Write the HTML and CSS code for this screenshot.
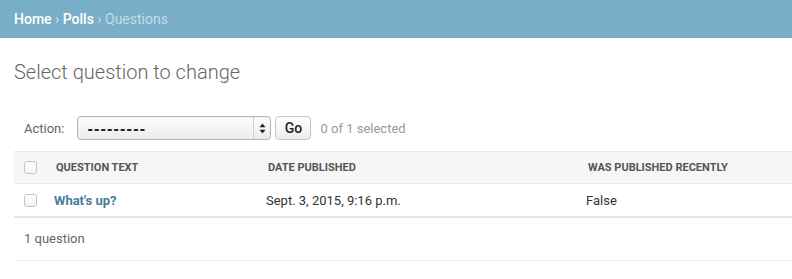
FILE: index.html
```html
<!DOCTYPE html>
<html>
<head>
<meta charset="utf-8">
<link rel="stylesheet" href="styles.css">
</head>
<body>
<div class="breadcrumbs"><a href="#">Home</a> › <a href="#">Polls</a> › Questions</div>
<div class="content">
  <h1>Select question to change</h1>
  <div class="changelist">
    <div class="actions">
      <label class="action-label">Action:</label>
      <div class="select-wrap">
        <select class="action-select"><option>---------</option></select>
        <span class="select-sep"></span>
        <svg class="select-arrows" width="7" height="11" viewBox="0 0 7 11"><path d="M3.5 0.5 L6.5 4.2 H0.5 Z M3.5 10.5 L6.5 6.8 H0.5 Z" fill="#222"/></svg>
      </div>
      <button class="go">Go</button>
      <span class="counter">0 of 1 selected</span>
    </div>
    <table class="result-list">
      <colgroup><col class="c1"><col class="c2"><col class="c3"><col class="c4"></colgroup>
      <thead>
        <tr>
          <th class="cb"><input type="checkbox"></th>
          <th>Question text</th>
          <th>Date published</th>
          <th>Was published recently</th>
        </tr>
      </thead>
      <tbody>
        <tr>
          <td class="cb"><input type="checkbox"></td>
          <th class="link"><a href="#">What's up?</a></th>
          <td>Sept. 3, 2015, 9:16 p.m.</td>
          <td>False</td>
        </tr>
      </tbody>
    </table>
    <p class="paginator">1 question</p>
  </div>
</div>
</body>
</html>
```
FILE: styles.css
```css
html, body {
  margin: 0;
  padding: 0;
  overflow: hidden;
}
body {
  font-family: Roboto, "Liberation Sans", sans-serif;
  font-size: 14px;
  color: #333;
  background: #fff;
}
.breadcrumbs {
  background: #79aec8;
  height: 38px;
  line-height: 38px;
  padding-left: 14px;
  color: #c4dce8;
  font-size: 14px;
}
.breadcrumbs a {
  color: #fff;
  text-decoration: none;
  font-weight: 500;
}
.content {
  padding-left: 14px;
}
h1 {
  margin: 22px 0 22px;
  font-size: 20px;
  line-height: 24px;
  font-weight: 300;
  color: #666;
}
.actions {
  display: flex;
  align-items: center;
  padding: 10px 10px 11px;
  height: 24px;
  font-size: 13px;
  color: #666;
}
.action-label {
  margin-right: 13px;
}
.select-wrap {
  position: relative;
  width: 194px;
  height: 24px;
}
.action-select {
  appearance: none;
  -webkit-appearance: none;
  width: 100%;
  height: 24px;
  margin: 0;
  border: 1px solid #b5b5b5;
  border-radius: 4px;
  background: linear-gradient(#fdfdfd, #ececec);
  font-family: "Liberation Sans", sans-serif;
  font-size: 16px;
  font-weight: bold;
  letter-spacing: 1.2px;
  color: #222;
  padding: 0 0 0 9px;
  box-shadow: inset 0 1px 1px rgba(0,0,0,0.05);
}
.select-sep {
  position: absolute;
  left: 176px;
  top: 1px;
  bottom: 1px;
  width: 1px;
  background: #cfcfcf;
}
.select-arrows {
  position: absolute;
  left: 182px;
  top: 7px;
}
.go {
  margin-left: 4px;
  width: 36px;
  height: 24px;
  padding: 0;
  border: 1px solid #c6c6c6;
  border-radius: 4px;
  background: linear-gradient(#ffffff, #ededed);
  font-family: Roboto, "Liberation Sans", sans-serif;
  font-size: 14px;
  font-weight: 500;
  color: #222;
}
.counter {
  margin-left: 9px;
  color: #999;
}
.result-list {
  width: 100%;
  border-collapse: collapse;
  table-layout: fixed;
}
.c1 { width: 32px; }
.c2 { width: 212px; }
.c3 { width: 320px; }
.c4 { width: auto; }
input[type=checkbox] {
  appearance: none;
  -webkit-appearance: none;
  display: block;
  width: 13px;
  height: 13px;
  margin: 0;
  border: 1px solid #c4c4c4;
  border-radius: 3px;
  background: linear-gradient(#fff, #f4f4f4);
  box-sizing: border-box;
}
thead th {
  background: #f6f6f6;
  border-top: 1px solid #eaeaea;
  border-bottom: 1px solid #eaeaea;
  height: 31px;
  padding: 0 0 0 10px;
  text-align: left;
  font-size: 11px;
  font-weight: bold;
  text-transform: uppercase;
  color: #555;
  vertical-align: middle;
  white-space: nowrap;
}
thead th.cb {
  padding-left: 10px;
}
tbody td, tbody th {
  height: 32px;
  padding: 0 0 0 8px;
  text-align: left;
  font-size: 13px;
  font-weight: normal;
  color: #333;
  border-bottom: 1px solid #e6e6e6;
  vertical-align: middle;
}
tbody .cb {
  padding-left: 10px;
}
tbody th.link a {
  color: #447e9b;
  font-weight: bold;
  text-decoration: none;
}
.paginator {
  margin: 0;
  padding: 0 10px;
  height: 42px;
  line-height: 42px;
  border-top: 1px solid #e6e6e6;
  border-bottom: 1px solid #eee;
  font-size: 13px;
  color: #666;
}
```
